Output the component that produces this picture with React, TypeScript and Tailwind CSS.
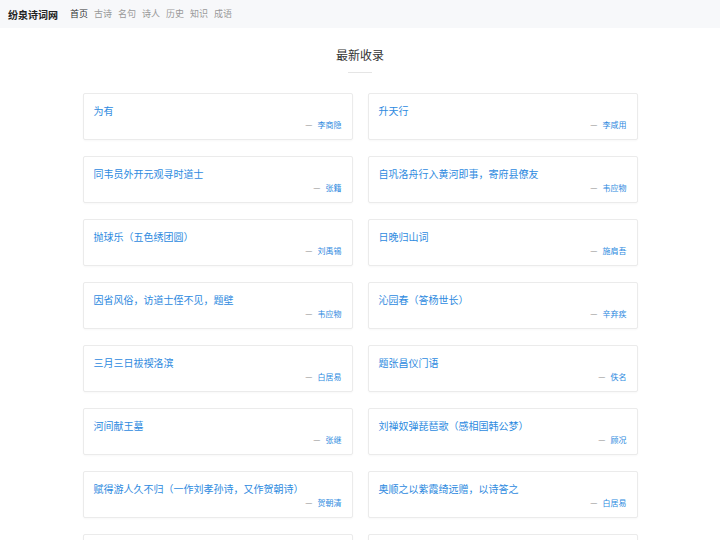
const items: [string, string][] = [
  ['为有', '李商隐'],
  ['升天行', '李咸用'],
  ['同韦员外开元观寻时道士', '张籍'],
  ['自巩洛舟行入黄河即事，寄府县僚友', '韦应物'],
  ['抛球乐（五色绣团圆）', '刘禹锡'],
  ['日晚归山词', '施肩吾'],
  ['因省风俗，访道士侄不见，题壁', '韦应物'],
  ['沁园春（答杨世长）', '辛弃疾'],
  ['三月三日祓禊洛滨', '白居易'],
  ['题张昌仪门语', '佚名'],
  ['河间献王墓', '张继'],
  ['刘禅奴弹琵琶歌（感相国韩公梦）', '顾况'],
  ['赋得游人久不归（一作刘孝孙诗，又作贺朝诗）', '贺朝清'],
  ['奥顺之以紫霞绮远赠，以诗答之', '白居易'],
  ['', ''],
  ['', ''],
];

const nav = ['首页', '古诗', '名句', '诗人', '历史', '知识', '成语'];

export default function App() {
  return (
    <div className="min-h-screen bg-white" style={{ fontFamily: '"Noto Sans CJK SC", "Noto Sans", sans-serif' }}>
      <div className="flex h-[28px] items-center bg-[#f7f8fa] px-[8px]">
        <span className="mr-[12px] text-[10px] font-bold text-[#222]">纷泉诗词网</span>
        <div className="flex gap-[6px]">
          {nav.map((n, i) => (
            <span key={n} className={`text-[9px] ${i === 0 ? 'text-[#333]' : 'text-[#999]'}`}>{n}</span>
          ))}
        </div>
      </div>
      <div className="flex flex-col items-center pt-[18px]">
        <h2 className="text-[12px] leading-[17px] text-[#333]">最新收录</h2>
        <div className="mt-[9px] h-px w-[24px] bg-[#e5e5e5]" />
      </div>
      <div className="mx-auto mt-[20px] grid w-[555px] grid-cols-2 gap-x-[15px] gap-y-[16px]">
        {items.map(([t, a], i) => (
          <div key={i} className="h-[47px] rounded-[2px] border border-[#ebebeb] bg-white px-[10px] pt-[8px] shadow-[0_1px_2px_rgba(0,0,0,0.03)]">
            <div className="text-[10px] leading-[17px] text-[#2d8ae0]">{t}</div>
            {a && (
              <div className="flex justify-end text-[8px] leading-[12px] text-[#2d8ae0]">
                <span className="mr-[5px] text-[#888]">—</span>{a}
              </div>
            )}
          </div>
        ))}
      </div>
    </div>
  );
}
